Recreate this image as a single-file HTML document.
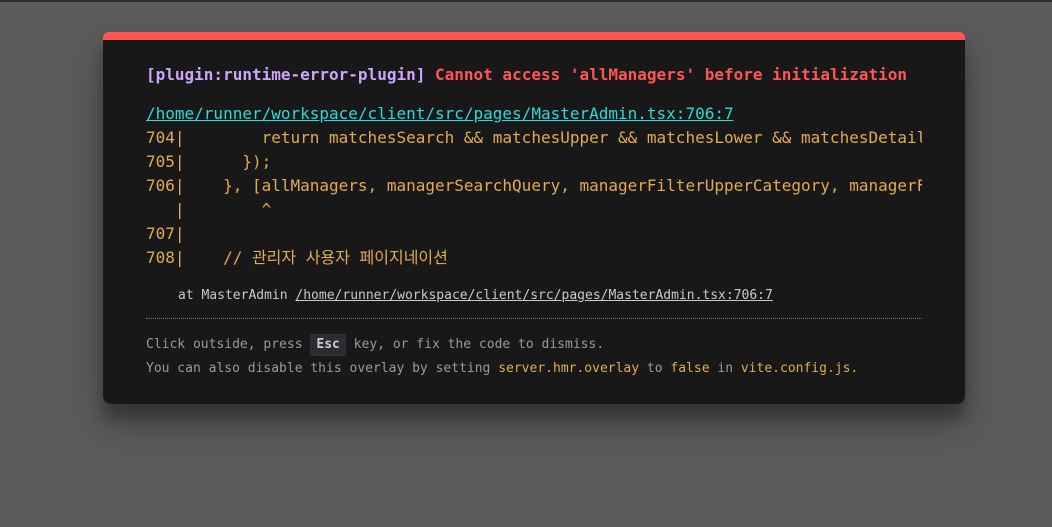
<!DOCTYPE html>
<html><head><meta charset="utf-8"><style>
html,body{margin:0;padding:0;width:1052px;height:527px;overflow:hidden;background:#5b5b5b;font-family:"DejaVu Sans Mono","Liberation Mono","Noto Sans CJK KR",monospace;}
.topline{position:absolute;left:0;top:0;width:1052px;height:2px;background:#2a2d35;}
.win{position:absolute;left:103px;top:32px;width:862px;height:372px;background:#181818;border-radius:6px 6px 8px 8px;border-top:8px solid #ff5555;box-sizing:border-box;box-shadow:0 19px 38px rgba(0,0,0,.3),0 15px 12px rgba(0,0,0,.22);overflow:hidden;}
.a{position:absolute;left:43px;white-space:pre;}
.t{top:25px;font-size:16px;font-weight:bold;line-height:20px;}
.p{color:#cfa4ff}.r{color:#ff5555}
.f{top:64px;font-size:16px;line-height:20px;color:#2dd9da;text-decoration:underline;}
.code{top:86px;font-size:16px;line-height:24px;color:#e2aa53;width:776px;overflow:hidden;}
.st{left:75px;top:248px;font-size:13px;line-height:16px;color:#c9c9c9;}
.st u{color:#c9c9c9}
.hr{position:absolute;left:43px;width:776px;top:278px;border-top:1px dotted #777;}
.ft{font-size:13px;line-height:24px;color:#999;top:293px;}
.k{display:inline-block;background:#2a2c31;color:#ccc;font-weight:bold;border-radius:3px;padding:0 5px;line-height:20px;border:1px solid #333;}
.y{color:#e2aa53}
</style></head><body>
<div class="topline"></div>
<div class="win">
<div class="a t"><span class="p">[plugin:runtime-error-plugin]</span> <span class="r">Cannot access 'allManagers' before initialization</span></div>
<div class="a f">/home/runner/workspace/client/src/pages/MasterAdmin.tsx:706:7</div>
<div class="a code">704|        return matchesSearch &amp;&amp; matchesUpper &amp;&amp; matchesLower &amp;&amp; matchesDetail
705|      });
706|    }, [allManagers, managerSearchQuery, managerFilterUpperCategory, managerFilterLower
   |        ^
707|
708|    // 관리자 사용자 페이지네이션</div>
<div class="a st">at MasterAdmin <u>/home/runner/workspace/client/src/pages/MasterAdmin.tsx:706:7</u></div>
<div class="hr"></div>
<div class="a ft">Click outside, press <span class="k">Esc</span> key, or fix the code to dismiss.
You can also disable this overlay by setting <span class="y">server.hmr.overlay</span> to <span class="y">false</span> in <span class="y">vite.config.js.</span></div>
</div>
</body></html>
